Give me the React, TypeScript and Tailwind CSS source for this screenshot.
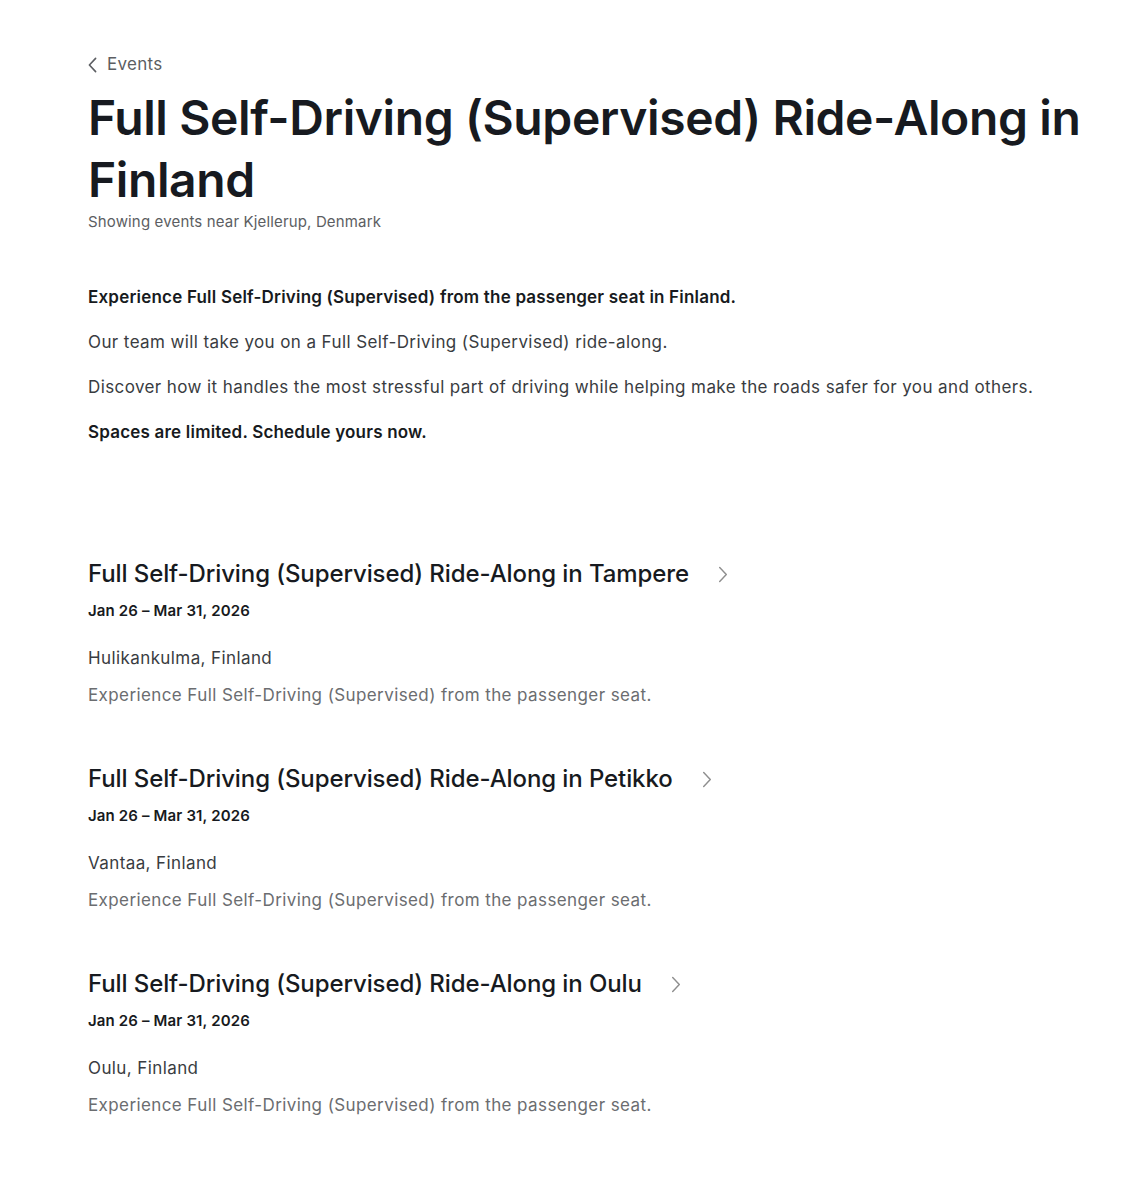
import React from "react";

const events = [
  { city: "Tampere", place: "Hulikankulma, Finland" },
  { city: "Petikko", place: "Vantaa, Finland" },
  { city: "Oulu", place: "Oulu, Finland" },
];

function Chevron({ className }: { className?: string }) {
  return (
    <svg viewBox="0 0 10 18" className={className} fill="none" stroke="currentColor" strokeWidth="1.5" strokeLinecap="round" strokeLinejoin="round">
      <path d="M1.5 1.5L8.5 9L1.5 16.5" />
    </svg>
  );
}

export default function App() {
  return (
    <div className="min-h-[1200px] bg-white text-[#171a20]" style={{ fontFamily: "Inter, 'Noto Sans', sans-serif" }}>
      <div className="pl-[88px] pr-[16px] pt-[52px]">
        <div className="flex items-center gap-[10px] text-[17px] tracking-[0.3px] text-[#5c5e62]">
          <svg viewBox="0 0 10 18" className="w-[9px] h-[16px]" fill="none" stroke="currentColor" strokeWidth="1.8" strokeLinecap="round" strokeLinejoin="round">
            <path d="M8.5 1.5L1.5 9L8.5 16.5" />
          </svg>
          <span>Events</span>
        </div>
        <h1 className="mt-[9px] text-[48px] leading-[62px] font-semibold tracking-[-0.4px] text-[#171a20]">
          Full Self-Driving (Supervised) Ride-Along in Finland
        </h1>
        <p className="mt-0 text-[15px] tracking-[0.15px] text-[#5c5e62]">Showing events near Kjellerup, Denmark</p>

        <div className="mt-[53px] flex flex-col gap-[22px] text-[17px] leading-[23px] tracking-[0.4px] text-[#393c41]">
          <p className="font-semibold tracking-[0.2px] text-[#171a20]">Experience Full Self-Driving (Supervised) from the passenger seat in Finland.</p>
          <p>Our team will take you on a Full Self-Driving (Supervised) ride-along.</p>
          <p>Discover how it handles the most stressful part of driving while helping make the roads safer for you and others.</p>
          <p className="font-semibold tracking-[0.2px] text-[#171a20]">Spaces are limited. Schedule yours now.</p>
        </div>

        <div className="mt-[114px] flex flex-col gap-[56px]">
          {events.map((e) => (
            <div key={e.city} className="flex flex-col">
              <div className="flex items-center gap-[29px]">
                <h2 className="text-[24px] leading-[32px] font-medium tracking-[-0.1px] text-[#171a20]">
                  Full Self-Driving (Supervised) Ride-Along in {e.city}
                </h2>
                <Chevron className="w-[10px] h-[17px] text-[#8e8e8e]" />
              </div>
              <p className="mt-[11px] text-[15px] leading-[20px] font-semibold tracking-[0.15px] text-[#171a20]">Jan 26 – Mar 31, 2026</p>
              <p className="mt-[26px] text-[17px] leading-[23px] tracking-[0.4px] text-[#393c41]">{e.place}</p>
              <p className="mt-[14px] text-[17px] leading-[23px] tracking-[0.4px] text-[#6b6d70]">Experience Full Self-Driving (Supervised) from the passenger seat.</p>
            </div>
          ))}
        </div>
      </div>
    </div>
  );
}
